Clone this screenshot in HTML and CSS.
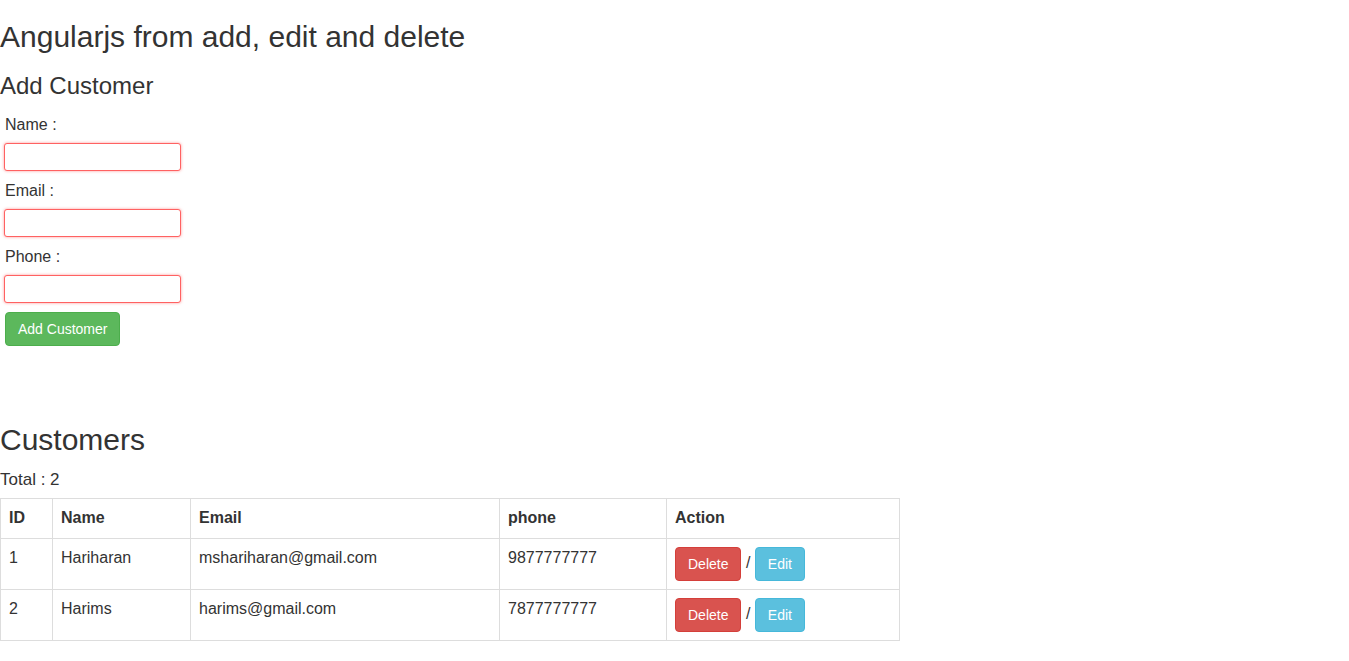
FILE: index.html
```html
<!DOCTYPE html>
<html>
<head>
<meta charset="utf-8">
<title>Angularjs from add, edit and delete</title>
<link rel="stylesheet" href="styles.css">
</head>
<body>
<h2 class="title">Angularjs from add, edit and delete</h2>
<h3 class="subtitle">Add Customer</h3>
<form class="customer-form">
  <label class="field-label">Name :</label>
  <input class="field-input" type="text">
  <label class="field-label">Email :</label>
  <input class="field-input" type="text">
  <label class="field-label">Phone :</label>
  <input class="field-input" type="text">
  <button type="button" class="btn btn-success">Add Customer</button>
</form>
<h2 class="title">Customers</h2>
<div class="total">Total : 2</div>
<table class="customers">
  <colgroup>
    <col class="c-id"><col class="c-name"><col class="c-email"><col class="c-phone"><col class="c-action">
  </colgroup>
  <tr>
    <th>ID</th><th>Name</th><th>Email</th><th>phone</th><th>Action</th>
  </tr>
  <tr>
    <td>1</td><td>Hariharan</td><td>mshariharan@gmail.com</td><td>9877777777</td>
    <td><button type="button" class="btn btn-danger">Delete</button> / <button type="button" class="btn btn-info">Edit</button></td>
  </tr>
  <tr>
    <td>2</td><td>Harims</td><td>harims@gmail.com</td><td>7877777777</td>
    <td><button type="button" class="btn btn-danger">Delete</button> / <button type="button" class="btn btn-info">Edit</button></td>
  </tr>
</table>
</body>
</html>
```
FILE: styles.css
```css
html, body {
  margin: 0;
  padding: 0;
  background: #fff;
}
body {
  font-family: "Liberation Sans", Arial, Helvetica, sans-serif;
  font-size: 16px;
  line-height: 1.42857;
  color: #333;
}
.title {
  font-size: 30px;
  font-weight: normal;
  line-height: 1.1;
  margin: 20px 0 10px;
}
.subtitle {
  font-size: 24px;
  font-weight: normal;
  line-height: 1.1;
  margin: 20px 0 10px;
}
.customer-form {
  display: flex;
  flex-direction: column;
  align-items: flex-start;
  padding: 5px 0 0 4px;
  margin: 0 0 77px;
}
.field-label {
  display: block;
  padding-left: 1px;
  height: 22px;
  line-height: 22px;
}
.field-input {
  box-sizing: border-box;
  width: 177px;
  height: 28px;
  margin: 7px 0 9px;
  padding: 2px 4px;
  border: 1px solid #ff6262;
  border-radius: 3px;
  box-shadow: 0 0 3px rgba(255, 80, 80, 0.6);
  background: #fff;
  font: inherit;
  outline: none;
}
.btn {
  display: inline-block;
  box-sizing: border-box;
  padding: 6px 12px;
  font-family: "Liberation Sans", Arial, Helvetica, sans-serif;
  font-size: 14px;
  line-height: 20px;
  color: #fff;
  border: 1px solid transparent;
  border-radius: 4px;
  vertical-align: middle;
  cursor: pointer;
  margin: 0;
}
.customer-form .btn {
  margin-left: 1px;
}
.btn-success {
  background: #5cb85c;
  border-color: #4cae4c;
}
.btn-danger {
  background: #d9534f;
  border-color: #d43f3a;
}
.btn-info {
  background: #5bc0de;
  border-color: #46b8da;
}
.total {
  font-size: 17px;
  line-height: 24px;
  padding-top: 2px;
  margin: 0 0 6px;
}
.customers {
  width: 899px;
  table-layout: fixed;
  border-collapse: collapse;
  border-spacing: 0;
  border: 1px solid #ddd;
}
.c-id { width: 52px; }
.c-name { width: 138px; }
.c-email { width: 309px; }
.c-phone { width: 167px; }
.c-action { width: 233px; }
.customers th,
.customers td {
  border: 1px solid #ddd;
  padding: 8px;
  text-align: left;
  vertical-align: top;
  line-height: 1.42857;
}
.customers th {
  font-weight: bold;
}
```
